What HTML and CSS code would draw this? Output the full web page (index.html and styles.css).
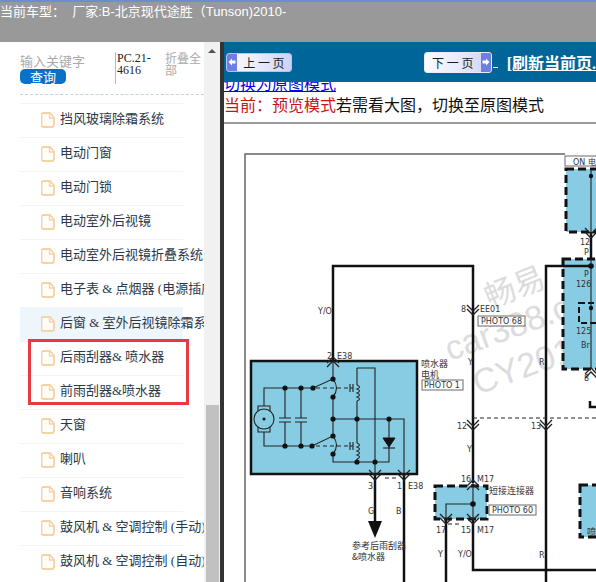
FILE: index.html
```html
<!DOCTYPE html>
<html lang="zh-CN">
<head>
    <meta charset="UTF-8">
    <title>电路图</title>
    <link rel="stylesheet" href="styles.css">
</head>
<body>
    <svg class="defs" width="0" height="0">
        <symbol id="file" viewBox="0 0 14 16">
            <path d="M2.500 1h6.500l4 4.500v7.500a2 2 0 0 1-2 2h-8.500a2 2 0 0 1-2-2v-10a2 2 0 0 1 2-2z" fill="#fffdf9" stroke="#f7d2a4" stroke-width="1.800"/>
            <path d="M8.500 1.500v4.500h4.500" fill="none" stroke="#f7d2a4" stroke-width="1.300"/>
        </symbol>
        <symbol id="arrow-left" viewBox="0 0 8 8">
            <path d="M0.500 4L4 0.500V2.500H7.500V5.500H4V7.500z" fill="#fff"/>
        </symbol>
        <symbol id="arrow-right" viewBox="0 0 8 8">
            <path d="M7.500 4L4 0.500V2.500H0.500V5.500H4V7.500z" fill="#fff"/>
        </symbol>
        <symbol id="chev" viewBox="-8 -6 16 12" overflow="visible">
            <path d="M-6 -5L0 1L6 -5M-6 -1L0 5L6 -1" fill="none" stroke="#222" stroke-width="1.300"/>
        </symbol>
    </svg>

    <div class="top-bar">当前车型：&nbsp;&nbsp;厂家:B-北京现代途胜（Tunson)2010-</div>

    <div class="main">
        <aside class="sidebar">
            <div class="search">
                <div class="search-left">
                    <span class="keyword">输入关键字</span>
                    <a class="query-btn">查询</a>
                </div>
                <div class="code">PC.21-4616</div>
                <div class="fold">折叠全部</div>
            </div>
            <ul class="tree">
                <li><svg class="file-icon"><use href="#file"/></svg>挡风玻璃除霜系统</li>
                <li><svg class="file-icon"><use href="#file"/></svg>电动门窗</li>
                <li><svg class="file-icon"><use href="#file"/></svg>电动门锁</li>
                <li><svg class="file-icon"><use href="#file"/></svg>电动室外后视镜</li>
                <li><svg class="file-icon"><use href="#file"/></svg>电动室外后视镜折叠系统</li>
                <li><svg class="file-icon"><use href="#file"/></svg>电子表 &amp; 点烟器 (电源插座)</li>
                <li class="active"><svg class="file-icon"><use href="#file"/></svg>后窗 &amp; 室外后视镜除霜系统</li>
                <li><svg class="file-icon"><use href="#file"/></svg>后雨刮器&amp; 喷水器</li>
                <li><svg class="file-icon"><use href="#file"/></svg>前雨刮器&amp;喷水器</li>
                <li><svg class="file-icon"><use href="#file"/></svg>天窗</li>
                <li><svg class="file-icon"><use href="#file"/></svg>喇叭</li>
                <li><svg class="file-icon"><use href="#file"/></svg>音响系统</li>
                <li><svg class="file-icon"><use href="#file"/></svg>鼓风机 &amp; 空调控制 (手动)</li>
                <li><svg class="file-icon"><use href="#file"/></svg>鼓风机 &amp; 空调控制 (自动)</li>
            </ul>
            <div class="red-box"></div>
        </aside>

        <div class="scrollbar">
            <span class="scroll-up"></span>
            <span class="scroll-thumb"></span>
        </div>

        <section class="content">
            <div class="nav">
                <a class="page-btn prev"><span class="btn-arrow"><svg width="8" height="8"><use href="#arrow-left"/></svg></span><span class="btn-text">上 一 页</span></a>
                <a class="page-btn next"><span class="btn-text">下 一 页</span><span class="btn-arrow"><svg width="8" height="8"><use href="#arrow-right"/></svg></span></a>
                <span class="link-gap"></span>
                <a class="refresh">[刷新当前页.</a>
            </div>
            <div class="mode-link"><a>切换为原图模式</a></div>
            <div class="mode-line"><span class="red">当前：预览模式</span>若需看大图，切换至原图模式</div>

            <svg class="diagram" width="372" height="459" viewBox="224 123 372 459">
                <!-- frame -->
                <path d="M245 582V153H565" fill="none" stroke="#666" stroke-width="1.500"/>

                <!-- watermark -->
                <g class="watermark">
                    <text x="490" y="308" font-size="31" transform="rotate(-22 490 308)">畅易</text>
                    <text x="450" y="360" font-size="34" transform="rotate(-20 450 360)">car388.c</text>
                    <text x="478" y="394" font-size="34" transform="rotate(-20 478 394)">CY201</text>
                </g>

                <!-- blue boxes -->
                <rect x="251" y="360" width="166" height="113" fill="#87cce2" stroke="#111" stroke-width="2.500"/>
                <rect x="566" y="168" width="40" height="63" fill="#87cce2" stroke="#111" stroke-width="3" stroke-dasharray="8 4"/>
                <rect x="563" y="258" width="43" height="110" fill="#87cce2" stroke="#111" stroke-width="3" stroke-dasharray="8 4"/>
                <rect x="579" y="302" width="30" height="20" fill="none" stroke="#111" stroke-width="2" stroke-dasharray="6 3"/>
                <rect x="435" y="485" width="52" height="33" fill="#87cce2" stroke="#111" stroke-width="3" stroke-dasharray="8 4"/>
                <rect x="580" y="484" width="30" height="52" fill="#87cce2" stroke="#111" stroke-width="3" stroke-dasharray="8 4"/>

                <!-- thick wires -->
                <g fill="none" stroke="#111" stroke-width="2.500">
                    <path d="M333 360V265H473V482"/>
                    <path d="M546 582V265H591"/>
                    <path d="M591 231V258"/>
                    <path d="M590 400V406H596"/>
                    <path d="M375 473V520"/>
                    <path d="M404 473V582"/>
                    <path d="M473 518V569H596"/>
                    <path d="M446 518V582"/>
                </g>
                <path d="M368 520H382L375 537z" fill="#111"/>

                <!-- thin wires -->
                <g fill="none" stroke="#222" stroke-width="1.100">
                    <path d="M591 168V231M591 258V368"/>
                    <path d="M446 518V503H473V485"/>
                    <path d="M473 503V518"/>
                    <path d="M264 405V387H313L333 378V360"/>
                    <path d="M264 431V445H312L333 435V418"/>
                    <path d="M285 387V417M279 417H291M279 421H291M285 421V445"/>
                    <path d="M301 387V417M295 417H307M295 421H307M301 421V445"/>
                    <path d="M333 396V418H404V473"/>
                    <path d="M333 453V461H389V418"/>
                    <path d="M357 367H375V473M357 367V384M357 400V442M357 458V461"/>
                    <path d="M357 384q5 2 0 4q5 2 0 4q5 2 0 4q5 2 0 4M357 442q5 2 0 4q5 2 0 4q5 2 0 4q5 2 0 4"/>
                    <path d="M333 378q7 9 0 18M333 435q7 9 0 18"/>
                    <path d="M258 405H270V411H258zM258 425H270V431H258z" fill="#87cce2"/>
                    <circle cx="264" cy="418" r="10" fill="#87cce2"/>
                    <path d="M316 387H349M316 445H349M448 523H462M385 477H398M473 417H596" stroke-dasharray="4 3"/>
                    <path d="M350 383V391M353 383V391M350 387H353M350 441V449M353 441V449M350 445H353"/>
                    <rect x="478" y="315" width="47" height="10" fill="#fff" stroke="#777"/>
                    <rect x="489" y="504" width="47" height="10" fill="#fff" stroke="#777"/>
                    <rect x="422" y="379" width="41" height="10" fill="#fff" stroke="#777"/>
                    <rect x="565" y="155" width="40" height="10" fill="#fff" stroke="#777"/>
                </g>
                <path d="M383 437H395L389 446zM383 447H395" fill="#111" stroke="#111"/>

                <!-- dots -->
                <g fill="#111">
                    <circle cx="285" cy="387" r="2.600"/><circle cx="301" cy="387" r="2.600"/><circle cx="313" cy="387" r="2.600"/>
                    <circle cx="333" cy="378" r="2.600"/><circle cx="333" cy="396" r="2.600"/><circle cx="333" cy="418" r="2.600"/>
                    <circle cx="357" cy="418" r="2.600"/><circle cx="389" cy="418" r="2.600"/>
                    <circle cx="285" cy="445" r="2.600"/><circle cx="301" cy="445" r="2.600"/><circle cx="312" cy="445" r="2.600"/>
                    <circle cx="333" cy="435" r="2.600"/><circle cx="333" cy="453" r="2.600"/>
                    <circle cx="357" cy="461" r="2.600"/><circle cx="375" cy="461" r="2.600"/>
                    <circle cx="264" cy="418" r="1.500"/>
                    <circle cx="473" cy="503" r="2.800"/><circle cx="591" cy="265" r="2.800"/><circle cx="591" cy="175" r="2.200"/><circle cx="591" cy="307" r="2.200"/>
                </g>

                <!-- connectors -->
                <g>
                    <use href="#chev" x="325" y="355" width="16" height="12" transform="rotate(180 333 361)"/>
                    <use href="#chev" x="367" y="468" width="16" height="12"/>
                    <use href="#chev" x="396" y="468" width="16" height="12"/>
                    <use href="#chev" x="465" y="303" width="16" height="12"/>
                    <use href="#chev" x="465" y="418" width="16" height="12"/>
                    <use href="#chev" x="538" y="418" width="16" height="12"/>
                    <use href="#chev" x="465" y="478" width="16" height="12" transform="rotate(180 473 484)"/>
                    <use href="#chev" x="438" y="512" width="16" height="12"/>
                    <use href="#chev" x="465" y="512" width="16" height="12"/>
                    <use href="#chev" x="583" y="226" width="16" height="12"/>
                    <use href="#chev" x="583" y="366" width="16" height="12" transform="rotate(180 591 372)"/>
                </g>

                <!-- labels -->
                <g class="label">
                    <text x="327" y="358">2</text><text x="337" y="358">E38</text>
                    <text x="368" y="488">3</text><text x="397" y="488">1</text><text x="408" y="488">E38</text>
                    <text x="318" y="313">Y/O</text>
                    <text x="461" y="311">8</text><text x="480" y="311">EE01</text>
                    <text x="468" y="364">Y</text><text x="539" y="364">R</text>
                    <text x="457" y="428">12</text><text x="531" y="428">13</text>
                    <text x="467" y="451">Y</text>
                    <text x="461" y="481">16</text><text x="477" y="481">M17</text>
                    <text x="436" y="532">17</text><text x="461" y="532">15</text><text x="477" y="532">M17</text>
                    <text x="438" y="556">Y</text><text x="458" y="556">Y/O</text><text x="539" y="557">R</text>
                    <text x="368" y="513">G</text><text x="396" y="513">B</text>
                    <text x="580" y="244">12</text><text x="584" y="254">P</text>
                    <text x="584" y="276">P</text><text x="576" y="286">126</text><text x="576" y="333">125</text><text x="581" y="347">Br</text>
                    <text x="584" y="380">8</text>
                    <text x="481" y="323">PHOTO 68</text>
                    <text x="492" y="512">PHOTO 60</text>
                    <text x="424" y="387">PHOTO 1</text>
                    <text x="573" y="164">ON 电</text>
                    <text x="421" y="366" class="cjk">喷水器</text><text x="421" y="377" class="cjk">电机</text>
                    <text x="489" y="493" class="cjk">短接连接器</text>
                    <text x="352" y="548" class="cjk">参考后雨刮器</text><text x="352" y="559" class="cjk">&amp;喷水器</text>
                    <text x="587" y="534" class="cjk">喷</text>
                </g>
            </svg>
        </section>
    </div>
</body>
</html>
```

FILE: styles.css
```css
html, body {
    margin: 0;
    padding: 0;
    height: 582px;
    overflow: hidden;
    background: #fff;
}
.defs { position: absolute; }
.top-bar {
    height: 40px;
    background: #999;
    border-top: 2px solid #6f8bd2;
    color: #fff;
    font-family: "Liberation Sans", "Noto Sans CJK SC", sans-serif;
    font-size: 13px;
    line-height: 20px;
    white-space: nowrap;
}
.main {
    display: flex;
    height: 540px;
}

/* left tree */
.sidebar {
    position: relative;
    width: 204px;
    flex: none;
    overflow: hidden;
    background: #fff;
    font-family: "Liberation Serif", "Noto Sans CJK SC", serif;
}
.search {
    display: flex;
    margin: 0 0 8px 20px;
    width: 184px;
    height: 42px;
    padding-top: 10px;
    border-bottom: 1px dashed #c5d3df;
}
.search-left {
    width: 95px;
    flex: none;
}
.keyword {
    display: block;
    color: #aaa;
    font-family: "Noto Sans CJK SC", sans-serif;
    font-size: 13px;
    line-height: 17px;
}
.query-btn {
    display: block;
    width: 46px;
    height: 15px;
    background: #0a70c8;
    border-radius: 5px;
    color: #fff;
    font-family: "Noto Sans CJK SC", sans-serif;
    font-size: 13px;
    line-height: 15px;
    text-align: center;
}
.code {
    width: 48px;
    height: 32px;
    flex: none;
    padding-left: 1px;
    border-left: 1px solid #a9bccb;
    color: #222;
    font-size: 12px;
    line-height: 12px;
}
.fold {
    width: 38px;
    color: #aaa;
    font-family: "Noto Sans CJK SC", sans-serif;
    font-size: 12px;
    line-height: 12px;
}
.tree {
    list-style: none;
    margin: 0 0 0 20px;
    padding: 0;
}
.tree li {
    display: flex;
    align-items: center;
    width: 163px;
    height: 27px;
    padding-bottom: 6px;
    border-top: 1px solid #f3f3f3;
    color: #2b3847;
    font-size: 13px;
    white-space: nowrap;
}
.tree li.active {
    background: #eef6fd;
}
.file-icon {
    width: 14px;
    height: 16px;
    flex: none;
    margin: 4px 5px 0 21px;
}
.red-box {
    position: absolute;
    left: 28px;
    top: 297px;
    width: 155px;
    height: 60px;
    border: 3px solid #e53a3f;
}

/* scrollbar column + dark divider */
.scrollbar {
    display: flex;
    flex-direction: column;
    justify-content: space-between;
    align-items: center;
    width: 16px;
    flex: none;
    background: #f1f1f1;
    border-right: 4px solid #333;
}
.scroll-up {
    margin-top: 7px;
    border-left: 4px solid transparent;
    border-right: 4px solid transparent;
    border-bottom: 4px solid #505050;
}
.scroll-thumb {
    width: 13px;
    height: 177px;
    background: #c1c1c1;
}

/* right page */
.content {
    flex: 1;
    min-width: 0;
    overflow: hidden;
    font-family: "Noto Sans CJK SC", sans-serif;
}
.nav {
    display: flex;
    align-items: center;
    height: 40px;
    padding-left: 2px;
    background: #006699;
    white-space: nowrap;
}
.page-btn {
    display: flex;
    align-items: center;
    box-sizing: border-box;
    overflow: hidden;
    height: 19px;
    background: linear-gradient(90deg, #fafbff, #e6e9fb 55%, #ccd2f5);
    border: 1px solid #b9c2ee;
    border-radius: 3px;
    color: #1c1c1c;
    font-size: 12px;
}
.btn-arrow {
    display: flex;
    align-items: center;
    justify-content: center;
    width: 10px;
    align-self: stretch;
    flex: none;
    background: #6f7ee2;
}
.btn-text {
    flex: 1;
    text-align: center;
}
.prev { width: 66px; }
.next {
    width: 68px;
    height: 21px;
    margin-left: 132px;
    border-color: #e8ebfb;
}
.link-gap {
    width: 5px;
    height: 11px;
    margin-left: 1px;
    border-bottom: 1px solid #fff;
}
.refresh {
    margin-left: 9px;
    color: #fff;
    font-family: "Liberation Serif", "Noto Sans CJK SC", serif;
    font-size: 16px;
    font-weight: bold;
    text-decoration: underline;
}
.mode-link {
    display: flex;
    align-items: flex-end;
    height: 11px;
    overflow: hidden;
    color: #00e;
    font-size: 16px;
    line-height: 20px;
    text-decoration: underline;
}
.mode-line {
    height: 29px;
    border-bottom: 2px solid #999;
    color: #111;
    font-size: 16px;
    line-height: 22px;
    white-space: nowrap;
}
.red { color: #c8141a; }
.diagram { display: block; }
.watermark text {
    fill: #dcdcdc;
    font-family: "Liberation Sans", "Noto Sans CJK SC", sans-serif;
}
.label text {
    fill: #333;
    font-family: "DejaVu Sans", sans-serif;
    font-size: 8px;
}
.label text.cjk {
    font-family: "Noto Sans CJK SC", sans-serif;
    font-size: 9px;
}
```
